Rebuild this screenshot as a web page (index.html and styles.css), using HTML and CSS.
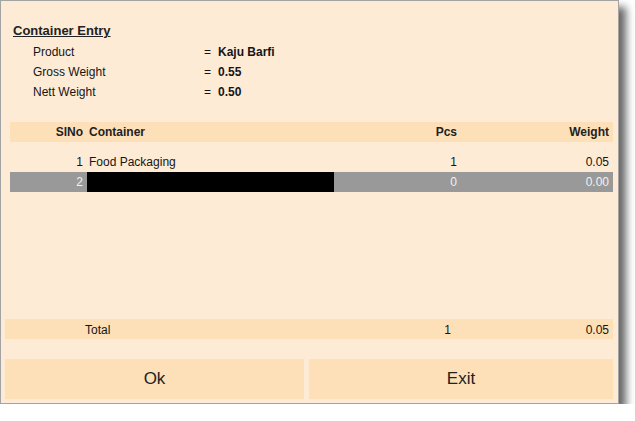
FILE: index.html
```html
<!DOCTYPE html>
<html lang="en">
<head>
    <meta charset="UTF-8">
    <meta name="viewport" content="width=device-width, initial-scale=1.0">
    <link rel="stylesheet" href="styles.css">
    <title>Container Entry</title>
</head>
<body>
    <div class="window">
        <div class="title">Container Entry</div>
        <div class="info">
            <div class="info-row"><span class="label">Product</span><span class="eq">=</span><span class="value">Kaju Barfi</span></div>
            <div class="info-row"><span class="label">Gross Weight</span><span class="eq">=</span><span class="value">0.55</span></div>
            <div class="info-row"><span class="label">Nett Weight</span><span class="eq">=</span><span class="value">0.50</span></div>
        </div>

        <div class="grid-row grid-head">
            <div class="c-sl">SlNo</div>
            <div class="c-name">Container</div>
            <div class="c-pcs">Pcs</div>
            <div class="c-wt">Weight</div>
        </div>
        <div class="grid-body">
            <div class="grid-row">
                <div class="c-sl">1</div>
                <div class="c-name">Food Packaging</div>
                <div class="c-pcs">1</div>
                <div class="c-wt">0.05</div>
            </div>
            <div class="grid-row selected">
                <div class="c-sl">2</div>
                <div class="c-name editing"></div>
                <div class="c-pcs">0</div>
                <div class="c-wt">0.00</div>
            </div>
        </div>

        <div class="total-row">
            <div></div>
            <div>Total</div>
            <div class="num">1</div>
            <div class="num last">0.05</div>
        </div>

        <div class="buttons">
            <button class="btn btn-ok">Ok</button>
            <button class="btn btn-exit">Exit</button>
        </div>
    </div>
</body>
</html>
```

FILE: styles.css
```css
body {
    margin: 0;
    background-color: #fff;
    font-family: 'Liberation Sans', Arial, sans-serif;
    font-size: 12px;
    color: #151515;
}

.window {
    width: 617px;
    height: 402px;
    border: 1px solid #a3a3a3;
    background-color: #feebd5;
    box-shadow: 7px 7px 8px rgba(0, 0, 0, 0.6);
    box-sizing: content-box;
}

.title {
    margin-top: 20px;
    margin-left: 12px;
    line-height: 20px;
    font-size: 13px;
    font-weight: bold;
    text-decoration: underline;
    color: #222;
}

.info-row {
    display: grid;
    grid-template-columns: 170px 14px 1fr;
    padding-left: 32px;
    padding-top: 1px;
    height: 20px;
    line-height: 20px;
    box-sizing: border-box;
}

.eq {
    padding-left: 1px;
}

.value {
    font-weight: bold;
    padding-left: 1px;
}

.grid-row {
    display: grid;
    grid-template-columns: 77px 247px 126px 1fr;
    margin: 0 5px 0 9px;
    height: 20px;
    line-height: 19px;
}

.grid-row > div {
    padding-top: 1px;
}

.grid-head {
    margin-top: 21px;
    background-color: #fde0b8;
    font-weight: bold;
    color: #222;
}

.grid-body {
    height: 177px;
    padding-top: 10px;
    box-sizing: border-box;
}

.c-sl,
.c-pcs,
.c-wt {
    text-align: right;
}

.c-sl {
    padding-right: 4px;
}

.c-name {
    padding-left: 2px;
}

.c-pcs {
    padding-right: 3px;
}

.c-wt {
    padding-right: 4px;
}

.selected {
    background-color: #999;
    color: #f2f2f2;
}

.editing {
    background-color: #000;
}

.total-row {
    display: grid;
    grid-template-columns: 80px 247px 124px 1fr;
    margin: 0 5px 0 4px;
    height: 20px;
    padding-top: 1px;
    line-height: 20px;
    box-sizing: border-box;
    background-color: #fde0b8;
}

.total-row .num {
    text-align: right;
    padding-right: 5px;
}

.total-row .last {
    padding-right: 4px;
}

.buttons {
    display: flex;
    gap: 5px;
    margin: 20px 5px 0 4px;
}

.btn {
    height: 40px;
    border: none;
    background-color: #fde0b8;
    font-family: 'Liberation Sans', Arial, sans-serif;
    font-size: 17px;
    color: #222;
    padding: 0;
}

.btn-ok {
    width: 299px;
}

.btn-exit {
    flex: 1;
}
```
